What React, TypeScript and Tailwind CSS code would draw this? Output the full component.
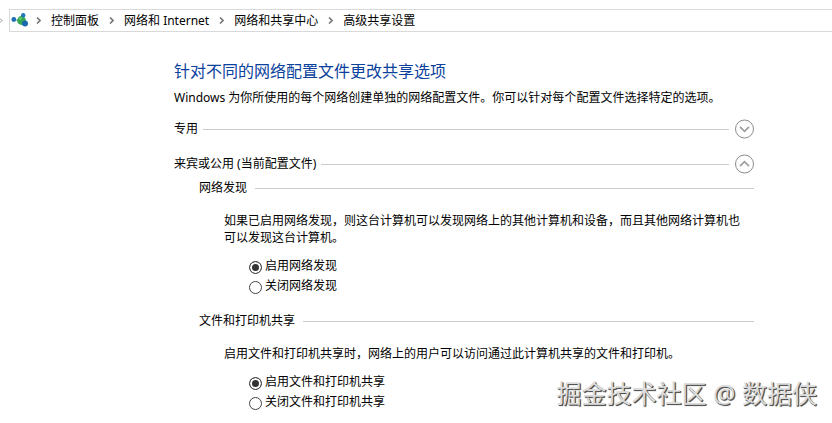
import { Fragment, useState } from "react";
import type { ReactNode } from "react";

const crumbs = ["控制面板", "网络和 Internet", "网络和共享中心", "高级共享设置"];

function CrumbArrow() {
  return (
    <svg className="h-[7px] w-[5px] shrink-0" viewBox="0 0 5 7" fill="none" stroke="#777" strokeWidth="1.6" aria-hidden="true">
      <path d="M1 0.5 4 3.5 1 6.5" />
    </svg>
  );
}

function NetworkIcon() {
  return (
    <svg className="h-4 w-[18px] shrink-0" viewBox="0 0 18 16" aria-hidden="true">
      <path d="M3 7 10 7.5 12.5 3M10 7.5 14 11.5" stroke="#8fb9d6" strokeWidth="1.2" fill="none" />
      <circle cx="10.5" cy="7.5" r="4.4" fill="#35a852" />
      <path d="M7.5 5.500a3.500 3.500 0 0 1 4-1l-2 3z" fill="#63c96a" />
      <circle cx="2.8" cy="6.500" r="2.400" fill="#1f6fb5" />
      <circle cx="12.2" cy="2.200" r="2.200" fill="#2477ba" />
      <circle cx="14" cy="10.500" r="3" fill="#1b68ae" />
    </svg>
  );
}

function Breadcrumb() {
  return (
    <nav className="flex items-center overflow-hidden pt-[9px]">
      <span className="flex w-[9px] shrink-0">
        <svg className="h-[5px] w-[3px]" viewBox="0 0 3 5" fill="none" stroke="#8a8a8a" aria-hidden="true">
          <path d="M0 0.5 2 2.5 0 4.5" />
        </svg>
      </span>
      <ol className="flex h-[23px] flex-1 items-center border-y border-l border-[#d9d9d9] pl-px leading-4 whitespace-nowrap">
        <li className="mr-[7px] flex">
          <NetworkIcon />
        </li>
        {crumbs.map((crumb) => (
          <Fragment key={crumb}>
            <li className="flex" aria-hidden="true">
              <CrumbArrow />
            </li>
            <li className="mx-[10px]">
              <a href="#">{crumb}</a>
            </li>
          </Fragment>
        ))}
      </ol>
    </nav>
  );
}

function ProfileHeader({ title, open, onToggle }: { title: string; open: boolean; onToggle: () => void }) {
  return (
    <div className="flex h-5 items-center">
      <h2 className="leading-4">{title}</h2>
      <span className="mx-[5px] h-px flex-1 bg-[#cbcbcb]" />
      <button type="button" aria-label={title} aria-expanded={open} onClick={onToggle} className="size-5">
        <svg className="size-5" viewBox="0 0 20 20" fill="none" stroke="#8c8c8c" aria-hidden="true">
          <circle cx="10.5" cy="10" r="9" />
          <path strokeWidth="1.8" stroke="#a0a0a0" d={open ? "M6 12.2 10.5 7.700 15 12.2" : "M6 7.800 10.5 12.300 15 7.800"} />
        </svg>
      </button>
    </div>
  );
}

interface SettingProps {
  name: string;
  title: string;
  options: string[];
  children: ReactNode;
}

function Setting({ name, title, options, children }: SettingProps) {
  return (
    <fieldset className="pl-[25px]">
      <legend className="contents">
        <span className="flex h-[18px] items-center leading-[18px]">
          {title}
          <span className="ml-2 h-px flex-1 bg-[#cbcbcb]" />
        </span>
      </legend>
      <p className="mt-[15px] pr-3 pl-[25px] leading-[17px]">{children}</p>
      <div className="mt-[10px] pl-[50px]">
        {options.map((option, i) => (
          <label key={option} className="flex h-5 items-center gap-[3px] leading-4">
            <input
              type="radio"
              name={name}
              defaultChecked={i === 0}
              className="mt-0.5 size-[13px] appearance-none rounded-full border border-[#444] bg-white checked:bg-[#333] checked:shadow-[inset_0_0_0_2px_#fff]"
            />
            {option}
          </label>
        ))}
      </div>
    </fieldset>
  );
}

export default function App() {
  const [privateOpen, setPrivateOpen] = useState(false);
  const [publicOpen, setPublicOpen] = useState(true);

  return (
    <div className="relative min-h-screen bg-white font-['Noto_Sans','Noto_Sans_CJK_SC',sans-serif] text-[12px] text-black">
      <Breadcrumb />
      <main className="pt-[27px] pr-6 pl-[174px]">
        <div className="max-w-[580px]">
          <h1 className="text-base leading-6 text-[#0a419c]">针对不同的网络配置文件更改共享选项</h1>
          <p className="mt-1.5 leading-[18px]">
            Windows 为你所使用的每个网络创建单独的网络配置文件。你可以针对每个配置文件选择特定的选项。
          </p>
          <div className="mt-3">
            <ProfileHeader title="专用" open={privateOpen} onToggle={() => setPrivateOpen(!privateOpen)} />
          </div>
          <div className="mt-[15px]">
            <ProfileHeader title="来宾或公用 (当前配置文件)" open={publicOpen} onToggle={() => setPublicOpen(!publicOpen)} />
          </div>
          {publicOpen && (
            <div className="mt-[5px] flex flex-col gap-4">
              <Setting name="discovery" title="网络发现" options={["启用网络发现", "关闭网络发现"]}>
                如果已启用网络发现，则这台计算机可以发现网络上的其他计算机和设备，而且其他网络计算机也可以发现这台计算机。
              </Setting>
              <Setting name="sharing" title="文件和打印机共享" options={["启用文件和打印机共享", "关闭文件和打印机共享"]}>
                启用文件和打印机共享时，网络上的用户可以访问通过此计算机共享的文件和打印机。
              </Setting>
            </div>
          )}
        </div>
      </main>
      <div className="pointer-events-none absolute right-[15px] bottom-3 text-[25px] leading-9 whitespace-nowrap text-[#dcdcdc] [text-shadow:1px_1px_0_#555,1px_1px_1px_#333]">
        掘金技术社区 @ 数据侠
      </div>
    </div>
  );
}
